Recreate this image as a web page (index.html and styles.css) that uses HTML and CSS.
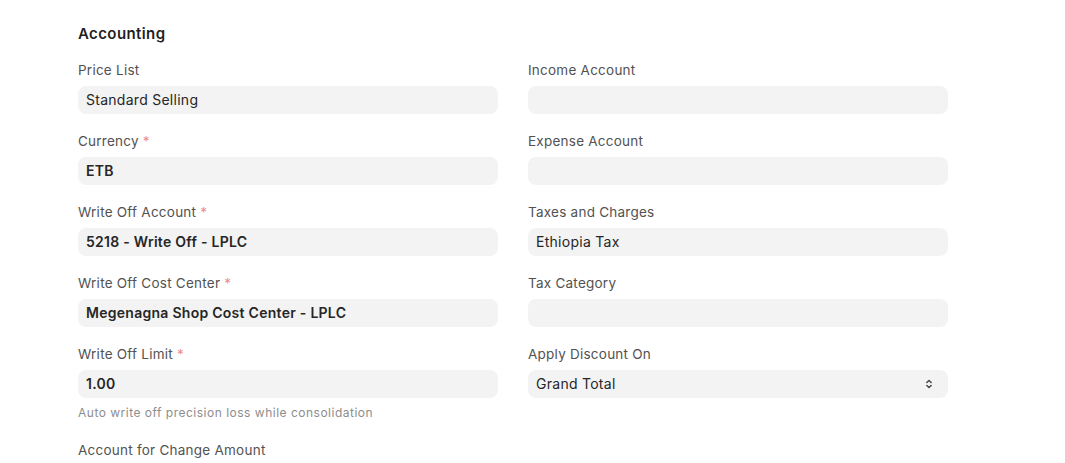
FILE: index.html
```html
<!DOCTYPE html>
<html>
<head>
<meta charset="utf-8">
<link rel="stylesheet" href="styles.css">
</head>
<body>
<div class="section">
  <h2 class="section-title">Accounting</h2>
  <div class="columns">
    <div class="col">
      <div class="field">
        <div class="label">Price List</div>
        <div class="input">Standard Selling</div>
      </div>
      <div class="field">
        <div class="label">Currency <span class="req">*</span></div>
        <div class="input bold">ETB</div>
      </div>
      <div class="field">
        <div class="label">Write Off Account <span class="req">*</span></div>
        <div class="input bold">5218 - Write Off - LPLC</div>
      </div>
      <div class="field">
        <div class="label">Write Off Cost Center <span class="req">*</span></div>
        <div class="input bold">Megenagna Shop Cost Center - LPLC</div>
      </div>
      <div class="field">
        <div class="label">Write Off Limit <span class="req">*</span></div>
        <div class="input bold">1.00</div>
        <div class="desc">Auto write off precision loss while consolidation</div>
      </div>
      <div class="field">
        <div class="label">Account for Change Amount</div>
      </div>
    </div>
    <div class="col">
      <div class="field">
        <div class="label">Income Account</div>
        <div class="input"></div>
      </div>
      <div class="field">
        <div class="label">Expense Account</div>
        <div class="input"></div>
      </div>
      <div class="field">
        <div class="label">Taxes and Charges</div>
        <div class="input">Ethiopia Tax</div>
      </div>
      <div class="field">
        <div class="label">Tax Category</div>
        <div class="input"></div>
      </div>
      <div class="field">
        <div class="label">Apply Discount On</div>
        <div class="input select">
          <span>Grand Total</span>
          <svg class="caret" width="8" height="12" viewBox="0 0 8 12" fill="none" stroke="#444" stroke-width="1.4" stroke-linecap="round" stroke-linejoin="round"><path d="M1.8 4.6 4 2.4l2.2 2.2"/><path d="M1.8 7.4 4 9.6l2.2-2.2"/></svg>
        </div>
      </div>
    </div>
  </div>
</div>
</body>
</html>
```

FILE: styles.css
```css
html, body {
  margin: 0;
  padding: 0;
  background: #fff;
  font-family: Inter, "Noto Sans", sans-serif;
  color: #383838;
}
.section {
  padding: 24px 0 0 78px;
  width: 870px;
}
.section-title {
  margin: 0 0 18px;
  font-size: 15px;
  font-weight: 600;
  line-height: 20px;
  letter-spacing: 0.4px;
  color: #1f1f1f;
}
.columns {
  display: grid;
  grid-template-columns: 420px 420px;
  column-gap: 30px;
}
.col {
  display: flex;
  flex-direction: column;
  gap: 19px;
}
.field {
  display: flex;
  flex-direction: column;
}
.label {
  font-size: 13.5px;
  line-height: 16px;
  letter-spacing: 0.24px;
  color: #525252;
  margin-bottom: 8px;
}
.req {
  color: #f08a8a;
}
.input {
  height: 28px;
  box-sizing: border-box;
  background: #f3f3f3;
  border-radius: 8px;
  padding: 0 8px;
  font-size: 14px;
  line-height: 28px;
  letter-spacing: 0.27px;
  color: #262626;
}
.input.bold {
  font-weight: 600;
}
.select {
  display: flex;
  align-items: center;
  justify-content: space-between;
  padding-right: 15px;
}
.caret {
  display: block;
}
.desc {
  margin-top: 7px;
  font-size: 12px;
  line-height: 16px;
  letter-spacing: 0.5px;
  color: #8d8d8d;
  margin-bottom: 2px;
}
```
